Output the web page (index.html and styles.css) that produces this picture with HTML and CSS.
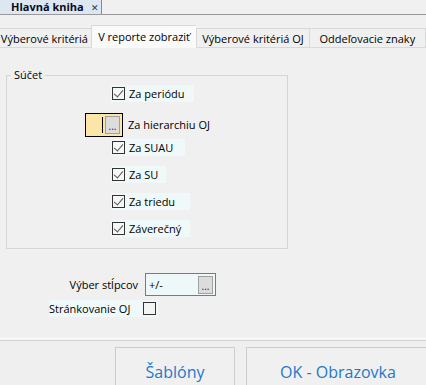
FILE: index.html
```html
<!DOCTYPE html>
<html>
  <head>
    <title>Hlavná kniha</title>
    <link rel="stylesheet" href="styles.css">
  </head>
  <body>
    <div class="doc-tabs">
      <div class="doc-tab">Hlavná kniha <span class="close">&#x2715;</span></div>
    </div>

    <div class="tabs">
      <div class="tab first">Výberové kritériá</div>
      <div class="tab active">V reporte zobraziť</div>
      <div class="tab">Výberové kritériá OJ</div>
      <div class="tab last">Oddeľovacie znaky</div>
    </div>

    <div class="content">
      <fieldset class="group">
        <legend>Súčet</legend>

        <label class="check row-periodu"><span class="box checked"></span>Za periódu</label>

        <div class="picker-row">
          <div class="picker">
            <span class="caret"></span>
            <span class="dots">...</span>
          </div>
          <span>Za hierarchiu OJ</span>
        </div>

        <label class="check row-suau"><span class="box checked"></span>Za SUAU</label>
        <label class="check row-su"><span class="box checked"></span>Za SU</label>
        <label class="check row-triedu"><span class="box checked"></span>Za triedu</label>
        <label class="check row-zaverecny"><span class="box checked"></span>Záverečný</label>
      </fieldset>

      <div class="form-row">
        <span class="form-label">Výber stĺpcov</span>
        <div class="text-input">
          <span>+/-</span>
          <span class="dots">...</span>
        </div>
      </div>
      <label class="check paging"><span class="paging-text">Stránkovanie OJ</span><span class="box"></span></label>
    </div>

    <div class="footer">
      <button class="btn btn-templates">Šablóny</button>
      <button class="btn btn-ok">OK - Obrazovka</button>
    </div>
  </body>
</html>
```

FILE: styles.css
```css
body {
  margin: 0;
  width: 426px;
  height: 385px;
  overflow: hidden;
  background: #f0f0f0;
  color: #000;
  font-family: "Open Sans", "Noto Sans", sans-serif;
  font-size: 11px;
}

/* document tab strip */
.doc-tabs {
  height: 14px;
  border-bottom: 1px solid #9a9a9a;
  display: flex;
}
.doc-tab {
  flex-shrink: 0;
  width: 102px;
  height: 14px;
  padding-left: 11px;
  box-sizing: border-box;
  background: #dce7f1;
  border-right: 1px solid #8a8a8a;
  font-weight: bold;
  font-size: 11px;
  line-height: 14px;
  color: #0a0a1e;
  white-space: nowrap;
}
.doc-tab .close {
  font-weight: normal;
  font-size: 9px;
  margin-left: 4px;
  color: #333;
}

/* page tabs */
.tabs {
  display: flex;
  align-items: flex-end;
  margin-top: 11px;
  height: 22px;
}
.tab {
  height: 20px;
  line-height: 19px;
  text-align: center;
  border: 1px solid #d9d9d9;
  border-right: none;
  box-sizing: border-box;
  white-space: nowrap;
  background: #f0f0f0;
}
.tab.first {
  width: 96px;
  margin-left: -3px;
}
.tab.active {
  width: 108px;
  height: 23px;
  line-height: 21px;
  background: #fafafa;
  border-bottom: none;
}
.tab:nth-child(3) {
  width: 115px;
}
.tab.last {
  width: 120px;
  border-right: 1px solid #d9d9d9;
}

/* content */
.content {
  padding: 20px 0 0 6px;
  height: 292px;
  box-sizing: border-box;
}
.group {
  width: 282px;
  height: 181px;
  margin: 0;
  padding: 0;
  border: 1px solid #d5d5d5;
  box-sizing: border-box;
  display: flex;
  flex-direction: column;
  align-items: flex-start;
}
.group legend {
  margin-left: 4px;
  padding: 0 3px;
  line-height: 14px;
}

.check {
  display: flex;
  align-items: center;
  gap: 4px;
  height: 17px;
  box-sizing: border-box;
  background: #eff9f9;
  margin-left: 104px;
  white-space: nowrap;
}
.box {
  flex-shrink: 0;
  width: 11px;
  height: 11px;
  border: 1px solid #333;
  background: #f7f7f7;
  margin-left: 1px;
  position: relative;
}
.box.checked::after {
  content: "";
  position: absolute;
  left: 3px;
  top: 0px;
  width: 4px;
  height: 8px;
  border: solid #555;
  border-width: 0 1.5px 1.5px 0;
  transform: rotate(40deg);
}

.row-periodu { margin-top: 3px; width: 83px; }
.row-suau { margin-top: 2px; width: 74px; }
.row-su { margin-top: 10px; width: 55px; }
.row-triedu { margin-top: 10px; width: 79px; }
.row-zaverecny { margin-top: 10px; width: 79px; }

.picker-row {
  display: flex;
  align-items: center;
  gap: 5px;
  margin-top: 11px;
  margin-left: 78px;
  white-space: nowrap;
  line-height: 20px;
}
.picker {
  width: 38px;
  height: 24px;
  border: 1px solid #000;
  box-sizing: border-box;
  background: #fbe5a9;
  display: flex;
  align-items: center;
  justify-content: flex-end;
  padding-right: 2px;
  gap: 2px;
}
.caret {
  width: 1px;
  height: 16px;
  background: #000;
}
.dots {
  width: 15px;
  height: 18px;
  box-sizing: border-box;
  border: 1px solid #a0a0a0;
  background: #dcdcdc;
  color: #1a1a60;
  font-size: 10px;
  line-height: 18px;
  text-align: center;
}

/* lower form */
.form-row {
  display: flex;
  align-items: center;
  gap: 7px;
  margin-top: 24px;
}
.form-label {
  width: 132px;
  text-align: right;
}
.text-input {
  width: 71px;
  height: 23px;
  box-sizing: border-box;
  border: 1px solid #7a7a7a;
  background: #eff8f8;
  display: flex;
  align-items: center;
  justify-content: space-between;
  padding: 0 2px 0 3px;
}
.paging {
  margin-left: 43px;
  margin-top: 4px;
  width: 109px;
  gap: 12px;
}
.paging .box {
  background: #f4f4f4;
}

/* footer */
.footer {
  border-top: 1px solid #d2d2d2;
  box-shadow: 0 -3px 0 #f6f6f6;
  display: flex;
  gap: 11px;
  padding: 6px 0 0 115px;
  background: #efefef;
}
.btn {
  flex-shrink: 0;
  height: 50px;
  border: 1px solid #cccccc;
  background: #f0f0f0;
  color: #1f78c8;
  font-family: "Open Sans", "Noto Sans", sans-serif;
  font-size: 16px;
  padding: 0;
}
.btn-templates {
  width: 120px;
}
.btn-ok {
  width: 184px;
}
```
